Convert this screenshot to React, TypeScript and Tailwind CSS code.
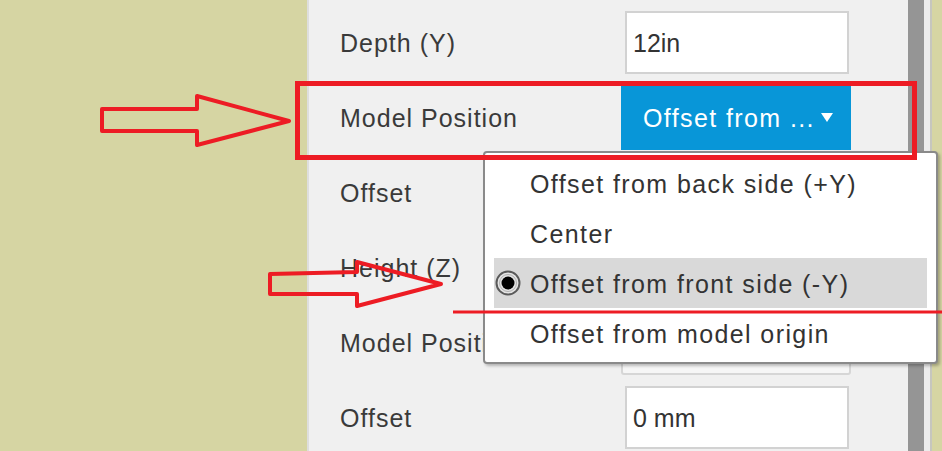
import React from "react";

type Row =
  | { label: string; kind: "input"; value: string }
  | { label: string; kind: "select"; value: string; active?: boolean };

const rows: Row[] = [
  { label: "Width (X)", kind: "input", value: "24in" },
  { label: "Depth (Y)", kind: "input", value: "12in" },
  { label: "Model Position", kind: "select", value: "Offset from ...", active: true },
  { label: "Offset", kind: "input", value: "0 mm" },
  { label: "Height (Z)", kind: "input", value: "10in" },
  { label: "Model Position", kind: "select", value: "Offset from ..." },
  { label: "Offset", kind: "input", value: "0 mm" },
];

const menuItems = [
  "Offset from back side (+Y)",
  "Center",
  "Offset from front side (-Y)",
  "Offset from model origin",
];

function Caret({ color }: { color: string }) {
  return (
    <svg width="12" height="9" viewBox="0 0 12 9">
      <polygon points="0,0 12,0 6,9" fill={color} />
    </svg>
  );
}

function RadioDot() {
  return (
    <svg width="26" height="26" viewBox="0 0 26 26">
      <circle cx="13" cy="13" r="11.5" fill="#e4e4e4" stroke="#5a5a5a" strokeWidth="2" />
      <circle cx="13" cy="13" r="8.5" fill="none" stroke="#b0b0b0" strokeWidth="1" />
      <circle cx="13" cy="13" r="6.5" fill="#000" />
    </svg>
  );
}

function Control({ row }: { row: Row }) {
  if (row.kind === "input") {
    return (
      <div className="ml-[4px] flex h-[63px] w-[224px] items-center border-2 border-[#d2d2d2] bg-white px-[6px] pt-[3px] text-[25px] text-[#333]">
        {row.value}
      </div>
    );
  }
  if (row.active) {
    return (
      <div className="flex h-[65px] w-[230px] items-center bg-[#0896d8] pl-[22px] pr-[18px] text-[25px] tracking-[1.4px] text-white">
        <span className="pt-[3px]">{row.value}</span>
        <span className="ml-auto">
          <Caret color="#fff" />
        </span>
      </div>
    );
  }
  return (
    <div className="flex h-[65px] w-[230px] items-center rounded-[3px] border-2 border-[#d6d6d6] bg-[#f6f6f6] pl-[22px] pr-[18px] text-[25px] tracking-[1.4px] text-[#333]">
      <span className="pt-[3px]">{row.value}</span>
      <span className="ml-auto">
        <Caret color="#333" />
      </span>
    </div>
  );
}

function Annotations() {
  return (
    <svg
      className="pointer-events-none absolute inset-0"
      width="942"
      height="451"
      viewBox="0 0 942 451"
    >
      <g fill="none" stroke="#ed1c24" strokeLinejoin="round">
        <rect x="297.5" y="83.5" width="617" height="74" strokeWidth="5" strokeLinejoin="miter" />
        <polygon
          points="102,109 197,109 197,96 289,121 197,145 197,131 102,131"
          strokeWidth="4"
        />
        <polygon
          points="270,274 357,272 357,262 441,284 357,306 357,294 270,294"
          strokeWidth="4"
        />
        <line x1="453" y1="312" x2="942" y2="312" strokeWidth="3" />
      </g>
    </svg>
  );
}

export default function App() {
  return (
    <div className="relative h-[451px] w-[942px] overflow-hidden bg-[#d6d5a3] font-['Liberation_Sans',Arial,sans-serif]">
      <div className="flex h-full">
        <div className="w-[307px] shrink-0" />

        {/* properties panel */}
        <div className="w-[601px] shrink-0 border-l-2 border-[#dedede] bg-[#f0f0f0] pl-[31px]">
          <div className="-mt-[70px] flex flex-col">
            {rows.map((row, i) => (
              <div key={i} className="flex h-[75px] items-center">
                <div className="w-[281px] shrink-0 pt-[3px] text-[25px] tracking-[1px] text-[#3a3a3a]">
                  {row.label}
                </div>
                <Control row={row} />
              </div>
            ))}
          </div>
        </div>

        {/* scrollbar */}
        <div className="w-[16px] shrink-0 bg-[#959595]" />
        <div className="w-[6px] shrink-0 bg-[#ececec]" />
        <div className="w-[2px] shrink-0 bg-[#c6c6bf]" />
        <div className="flex-1" />
      </div>

      {/* open dropdown */}
      <div className="absolute left-[483px] top-[151px] h-[213px] w-[455px] rounded-[4px] border-2 border-[#8a8a8a] bg-white px-[9px] pt-[5px] shadow-[2px_2px_3px_rgba(0,0,0,0.25)]">
        {menuItems.map((item, i) => (
          <div
            key={item}
            className={
              i === 2
                ? "relative flex h-[50px] items-center bg-[#d9d9d9] pl-[36px] pt-[3px] text-[25px] tracking-[1.4px] text-[#333]"
                : "relative flex h-[50px] items-center pl-[36px] pt-[3px] text-[25px] tracking-[1.4px] text-[#333]"
            }
          >
            {i === 2 && (
              <span className="absolute left-[1px] top-[12px]">
                <RadioDot />
              </span>
            )}
            {item}
          </div>
        ))}
      </div>

      <Annotations />
    </div>
  );
}
